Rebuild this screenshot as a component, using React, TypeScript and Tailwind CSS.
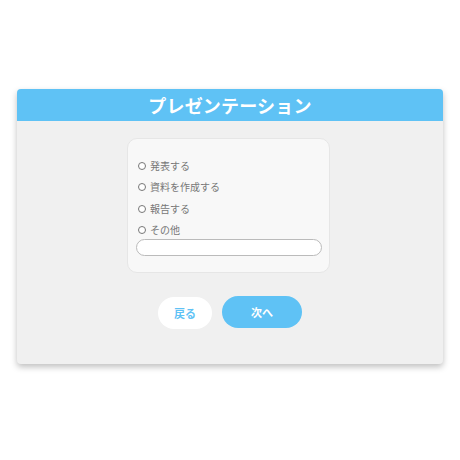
import React from "react";

const items = ["発表する", "資料を作成する", "報告する", "その他"];

export default function App() {
  return (
    <div
      className="w-[460px] h-[460px] bg-white relative"
      style={{ fontFamily: '"Noto Sans CJK JP", "Noto Sans", sans-serif' }}
    >
      <div className="absolute left-[17px] top-[89px] w-[426px] h-[275px] bg-[#f0f0f0] rounded-[4px] shadow-[0_3px_6px_rgba(0,0,0,0.25)] overflow-hidden flex flex-col">
        <div className="h-[32px] bg-[#5fc2f5] flex items-center justify-center">
          <span className="text-white font-bold text-[18px] leading-none tracking-[0.2px]">
            プレゼンテーション
          </span>
        </div>
        <div className="flex justify-center mt-[17px] pr-[3px]">
          <div className="w-[203px] h-[135px] bg-[#f8f8f8] border border-[#e6e6e6] rounded-[10px] pt-[19px] px-[8px]">
            <div className="flex flex-col gap-[6px]">
              {items.map((t) => (
                <label key={t} className="flex items-center h-[15.5px] pl-[2px]">
                  <span className="w-[8px] h-[8px] rounded-full border-[1.5px] border-[#777] bg-white mr-[4px]" />
                  <span className="text-[10px] text-[#777] leading-none">{t}</span>
                </label>
              ))}
            </div>
            <div className="mt-[1px] h-[17px] w-[186px] rounded-full border border-[#bbb] bg-white" />
          </div>
        </div>
        <div className="flex justify-center gap-[10px] mt-[24px]">
          <button className="w-[54px] h-[32px] rounded-full bg-white text-[#5fc2f5] font-bold text-[11px]">
            戻る
          </button>
          <button className="w-[80px] h-[32px] rounded-full bg-[#5fc2f5] text-white font-bold text-[11px] -mt-[1px]">
            次へ
          </button>
        </div>
      </div>
    </div>
  );
}
